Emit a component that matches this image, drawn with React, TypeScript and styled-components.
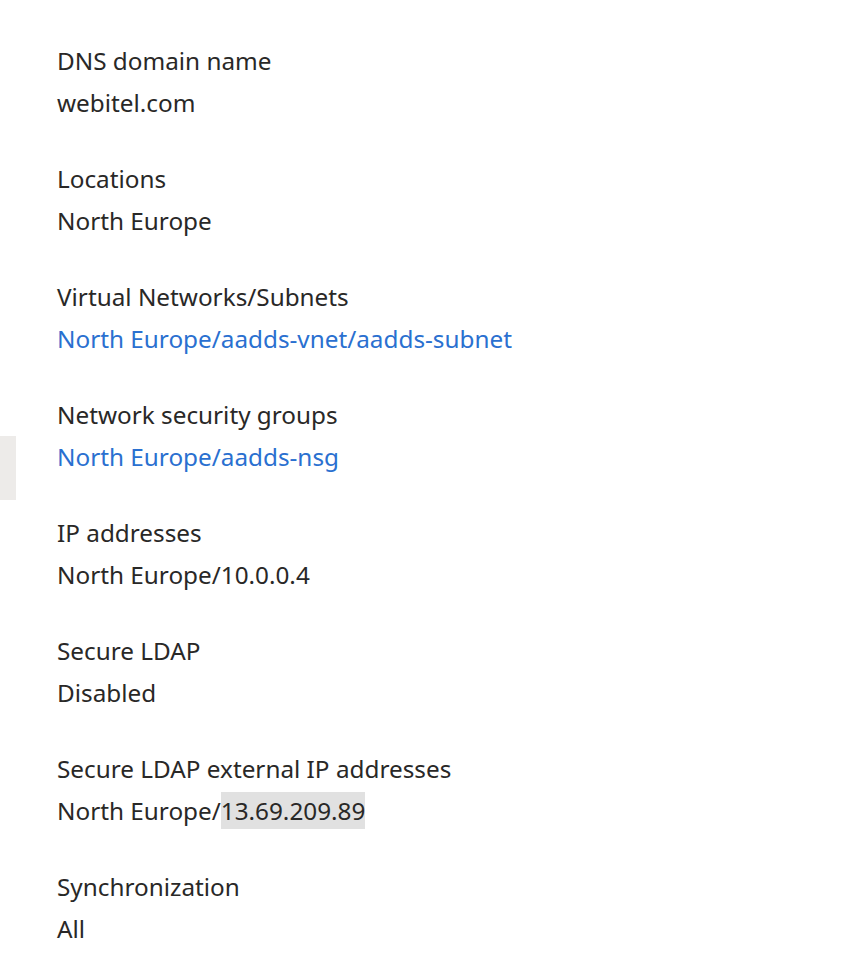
import React from "react";
import styled, { createGlobalStyle } from "styled-components";

const Global = createGlobalStyle`
  html, body { margin: 0; padding: 0; background: #ffffff; }
  body { font-family: "Noto Sans", "Open Sans", "Liberation Sans", sans-serif; color: #323130; }
`;

const Page = styled.main`
  padding: 45px 0 0 57px;
`;

const List = styled.dl`
  margin: 0;
  display: flex;
  flex-direction: column;
  gap: 44px;
`;

const Group = styled.div`
  display: flex;
  flex-direction: column;
  gap: 10px;
`;

const Label = styled.dt`
  font-size: 24.3px;
  line-height: 32px;
  color: #292827;
`;

const Value = styled.dd`
  margin: 0;
  font-size: 24.3px;
  line-height: 32px;
  color: #292827;
`;

const Link = styled.a`
  color: #2a70d0;
  text-decoration: none;
  cursor: pointer;
`;

const Highlight = styled.span`
  background: #e1e1e1;
  padding: 2px 0 2px 0;
`;

const Handle = styled.div`
  position: fixed;
  left: 0;
  top: 436px;
  width: 16px;
  height: 64px;
  background: #edebe9;
`;

type Item = { label: string; value: React.ReactNode };

const items: Item[] = [
  { label: "DNS domain name", value: "webitel.com" },
  { label: "Locations", value: "North Europe" },
  { label: "Virtual Networks/Subnets", value: <Link>North Europe/aadds-vnet/aadds-subnet</Link> },
  { label: "Network security groups", value: <Link>North Europe/aadds-nsg</Link> },
  { label: "IP addresses", value: "North Europe/10.0.0.4" },
  { label: "Secure LDAP", value: "Disabled" },
  {
    label: "Secure LDAP external IP addresses",
    value: (
      <>
        North Europe/<Highlight>13.69.209.89</Highlight>
      </>
    ),
  },
  { label: "Synchronization", value: "All" },
];

export default function App() {
  return (
    <>
      <Global />
      <Handle />
      <Page>
        <List>
          {items.map((it) => (
            <Group key={it.label}>
              <Label>{it.label}</Label>
              <Value>{it.value}</Value>
            </Group>
          ))}
        </List>
      </Page>
    </>
  );
}
